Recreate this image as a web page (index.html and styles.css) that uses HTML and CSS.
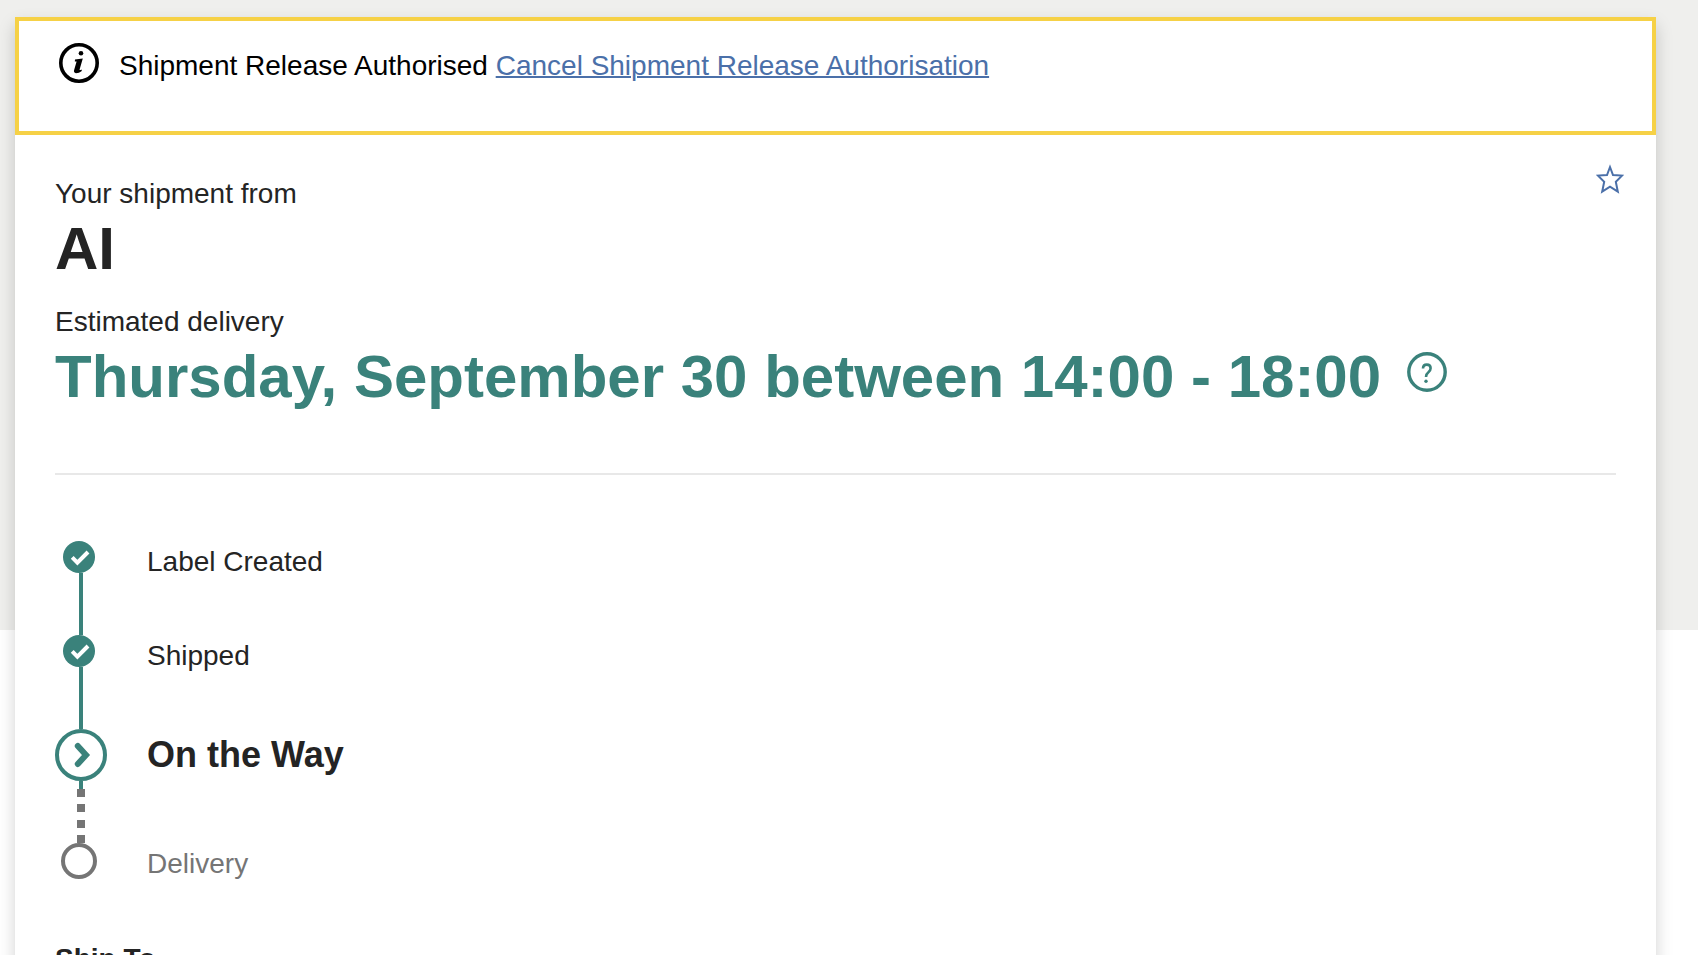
FILE: index.html
```html
<!DOCTYPE html>
<html lang="en">
<head>
    <meta charset="UTF-8">
    <meta name="viewport" content="width=device-width, initial-scale=1">
    <title>Shipment tracking</title>
    <link rel="stylesheet" href="styles.css">
</head>
<body>
    <main class="card">
        <div class="notice">
            <svg class="notice-icon" viewBox="0 0 40 40" fill="none" stroke="#000" aria-hidden="true">
                <circle cx="20" cy="20" r="18.2" stroke-width="3.6"/>
                <circle cx="22" cy="10.2" r="2.3" fill="#000" stroke="none"/>
                <path d="M16 16.6 23.8 15.6 20.6 26.4Q20.4 27.4 22.6 26.4L22.8 28Q20 30.2 17 30.2 14.2 29.8 15.2 26.8L17.6 18.6 15.8 18.4Z" fill="#000" stroke="none"/>
            </svg>
            <p class="notice-text">Shipment Release Authorised <a href="#cancel">Cancel Shipment Release Authorisation</a></p>
        </div>

        <div class="content">
            <header class="summary">
                <div class="summary-text">
                    <p class="label">Your shipment from</p>
                    <h1 class="title">AI</h1>
                    <p class="label">Estimated delivery</p>
                    <div class="eta">
                        <h2 class="title">Thursday, September 30 between 14:00 - 18:00</h2>
                        <button class="help" type="button" aria-label="About the estimated delivery">
                            <svg viewBox="0 0 40 40" fill="none" stroke="currentColor">
                                <circle cx="20" cy="20" r="18.2" stroke-width="3.4"/>
                                <path d="M16 16.6Q16 12.6 19.8 12.6 23.6 12.6 23.6 16.2 23.6 18.4 21.4 20.2 19 22 19 25" stroke-width="2.6"/>
                                <circle cx="19" cy="29.2" r="1.7" fill="currentColor" stroke="none"/>
                            </svg>
                        </button>
                    </div>
                </div>
                <button class="favourite" type="button" aria-label="Add to favourites">
                    <svg viewBox="0 0 28 30" fill="none" stroke="currentColor" stroke-width="2">
                        <path d="M14 3 17 11 26 11.6 19.8 17.8 21.8 27.6 14 22.6 6.2 27.6 8.2 17.8 2 11.6 11 11Z"/>
                    </svg>
                </button>
            </header>

            <hr class="divider">

            <ol class="steps">
                <li class="step">
                    <div class="rail">
                        <svg class="marker" viewBox="0 0 32 32" aria-hidden="true">
                            <circle cx="16" cy="16" r="16" fill="#3a827b"/>
                            <path d="M9.2 16.4 14.4 21.6 25 11" fill="none" stroke="#fff" stroke-width="4"/>
                        </svg>
                        <span class="line"></span>
                    </div>
                    <span class="step-name">Label Created</span>
                </li>
                <li class="step">
                    <div class="rail">
                        <svg class="marker" viewBox="0 0 32 32" aria-hidden="true">
                            <circle cx="16" cy="16" r="16" fill="#3a827b"/>
                            <path d="M9.2 16.4 14.4 21.6 25 11" fill="none" stroke="#fff" stroke-width="4"/>
                        </svg>
                        <span class="line"></span>
                    </div>
                    <span class="step-name">Shipped</span>
                </li>
                <li class="step current" aria-current="step">
                    <div class="rail">
                        <svg class="marker" viewBox="0 0 52 52" fill="none" stroke="#3a827b" aria-hidden="true">
                            <circle cx="26" cy="26" r="24" stroke-width="4"/>
                            <path d="M22.8 17 31 26 22.8 35" stroke-width="6" stroke-linecap="round"/>
                        </svg>
                        <span class="line"></span>
                        <svg class="dots" viewBox="0 0 8 54" fill="#757575" aria-hidden="true">
                            <path d="M0 0h8v8H0zM0 15h8v8H0zM0 31h8v8H0zM0 46h8v8H0z"/>
                        </svg>
                    </div>
                    <span class="step-name">On the Way</span>
                </li>
                <li class="step pending">
                    <div class="rail">
                        <span class="marker"></span>
                    </div>
                    <span class="step-name">Delivery</span>
                </li>
            </ol>

            <h3 class="section-title">Ship To</h3>
        </div>
    </main>
</body>
</html>
```
FILE: styles.css
```css
* { box-sizing: border-box; }

body {
    margin: 0;
    height: 100vh;
    overflow: hidden;
    padding: 17px 42px 0 15px;
    background: #fff linear-gradient(#efefed, #efefed) no-repeat 0 0 / 100% 630px;
    color: #242424;
    font-family: "Liberation Sans", Helvetica, Arial, sans-serif;
    font-size: 28px;
    line-height: 44px;
}

h1, h2, h3, p { margin: 0; }

button { padding: 0; border: 0; background: none; cursor: pointer; }
svg { display: block; }

.card {
    min-height: 100vh;
    background: #fff;
    box-shadow: 0 8px 16px rgba(0, 0, 0, 0.18);
}

/* notice */
.notice {
    display: flex;
    gap: 20px;
    min-height: 118px;
    padding: 22px 40px;
    border: 4px solid #f6d146;
    color: #000;
}
.notice-icon { flex: none; width: 40px; height: 40px; }
.notice-text { line-height: 46px; }
.notice a { color: #4b70a9; text-decoration-thickness: 2px; }

.content { padding: 37px 40px; }

/* summary */
.summary { display: flex; align-items: flex-start; }
.summary-text { flex: 1; }
.title { font-size: 60px; line-height: 66px; }
h1.title { margin-bottom: 18px; }
.eta { display: flex; gap: 26px; color: #3a827b; }
.help { width: 40px; height: 40px; margin-top: 8px; color: inherit; }
.favourite { width: 28px; height: 30px; margin: -8px -8px 0 0; color: #4b70a9; }

.divider { margin: 63px 0 66px; border: 0; border-top: 2px solid #e8e8e8; }

/* progress */
.steps { margin: 0; padding: 0; list-style: none; }
.step { display: flex; gap: 40px; min-height: 94px; }
.step-name { padding-top: 5px; line-height: 32px; }
.rail { display: flex; flex-direction: column; align-items: center; width: 52px; }
.marker { flex: none; width: 32px; height: 32px; margin-right: 4px; }
.line { flex: 1; width: 4px; background: #3a827b; }
.dots { flex: none; width: 8px; height: 54px; }

.current { min-height: 114px; }
.current .marker { width: 52px; height: 52px; margin-right: 0; }
.current .step-name { padding-top: 0; font-size: 36px; font-weight: bold; line-height: 52px; }

.pending { color: #757575; }
.pending .marker { width: 36px; height: 36px; border: 4px solid #757575; border-radius: 50%; }

.section-title { font-size: 28px; }
```
